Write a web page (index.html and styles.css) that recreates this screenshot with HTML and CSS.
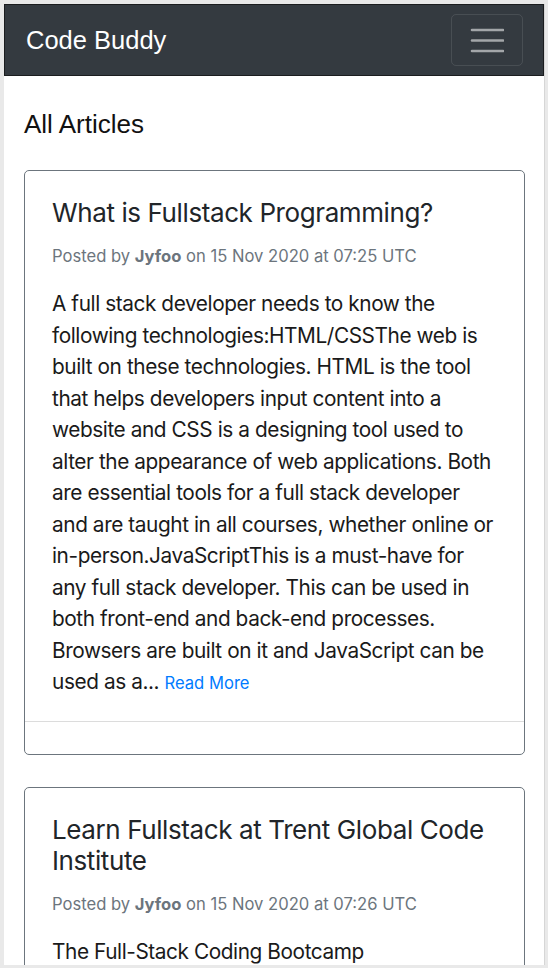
FILE: index.html
```html
<!DOCTYPE html>
<html lang="en">
<head>
<meta charset="utf-8">
<title>Code Buddy</title>
<link rel="stylesheet" href="styles.css">
</head>
<body>
<div class="frame">
  <nav class="navbar">
    <a class="brand" href="#">Code Buddy</a>
    <button class="toggler" type="button" aria-label="Toggle navigation">
      <svg width="40" height="40" viewBox="0 0 40 40" aria-hidden="true">
        <path d="M8 10H39M8 20.5H39M8 31H39" stroke="rgba(255,255,255,0.55)" stroke-width="2.6" stroke-linecap="round"/>
      </svg>
    </button>
  </nav>
  <main class="container">
    <h1 class="page-title">All Articles</h1>
    <article class="card">
      <div class="card-body">
        <h2 class="card-title">What is Fullstack Programming?</h2>
        <p class="meta">Posted by <strong>Jyfoo</strong> on 15 Nov 2020 at 07:25 UTC</p>
        <p class="excerpt">A full stack developer needs to know the following technologies:HTML/CSSThe web is built on these technologies. HTML is the tool that helps developers input content into a website and CSS is a designing tool used to alter the appearance of web applications. Both are essential tools for a full stack developer and are taught in all courses, whether online or in-person.JavaScriptThis is a must-have for any full stack developer. This can be used in both front-end and back-end processes. Browsers are built on it and JavaScript can be used as a... <a class="more" href="#">Read More</a></p>
      </div>
      <div class="card-footer"></div>
    </article>
    <article class="card">
      <div class="card-body">
        <h2 class="card-title">Learn Fullstack at Trent Global Code Institute</h2>
        <p class="meta">Posted by <strong>Jyfoo</strong> on 15 Nov 2020 at 07:26 UTC</p>
        <p class="excerpt">The Full-Stack Coding Bootcamp<br>Students learn front-end and back-end technologies in an intensive programme... <a class="more" href="#">Read More</a></p>
      </div>
      <div class="card-footer"></div>
    </article>
  </main>
</div>
</body>
</html>
```

FILE: styles.css
```css
html, body {
  margin: 0;
  padding: 0;
}
body {
  background: #e9e9e9;
  padding: 4px 3px 3px 4px;
  font-family: Inter, "Noto Sans", sans-serif;
  color: #212529;
}
.frame {
  background: #fff;
  height: 961px;
  overflow: hidden;
  border-right: 1px solid #d6d6d6;
}
.navbar {
  display: flex;
  align-items: center;
  justify-content: space-between;
  height: 70px;
  background: #343a40;
  border: 1px solid #1b1d1f;
  padding: 0 20px 0 21px;
}
.brand {
  font-family: "Liberation Sans", Arial, sans-serif;
  font-size: 25.5px;
  color: #fff;
  text-decoration: none;
}
.toggler {
  width: 72px;
  height: 52px;
  padding: 0;
  display: flex;
  align-items: center;
  justify-content: center;
  background: transparent;
  border: 1px solid rgba(255,255,255,0.1);
  border-radius: 5px;
}
.toggler svg {
  display: block;
  margin-left: -7px;
}
.container {
  padding: 0 19px 0 20px;
}
.page-title {
  font-family: "Liberation Sans", Arial, sans-serif;
  font-weight: 400;
  font-size: 26px;
  line-height: 31px;
  margin: 33px 0 30px;
  color: #111;
}
.card {
  border: 1px solid #6c757d;
  border-radius: 5px;
  margin-bottom: 32px;
}
.card-body {
  padding: 26px 26px 21px 27px;
}
.card-title {
  font-weight: 400;
  font-size: 26px;
  line-height: 31.2px;
  margin: 0 0 16px;
  color: #212529;
  letter-spacing: -0.4px;
}
.meta {
  font-size: 16.6px;
  line-height: 25px;
  color: #6c757d;
  margin: 0 0 19px;
}
.meta strong {
  font-weight: 700;
}
.excerpt {
  font-size: 20.8px;
  line-height: 31.5px;
  margin: 0;
  color: #1a1a1a;
  letter-spacing: -0.42px;
}
.more {
  font-size: 16.6px;
  color: #007bff;
  text-decoration: none;
  letter-spacing: 0;
}
.card-footer {
  border-top: 1px solid #dcdcdc;
  height: 32px;
}
```
